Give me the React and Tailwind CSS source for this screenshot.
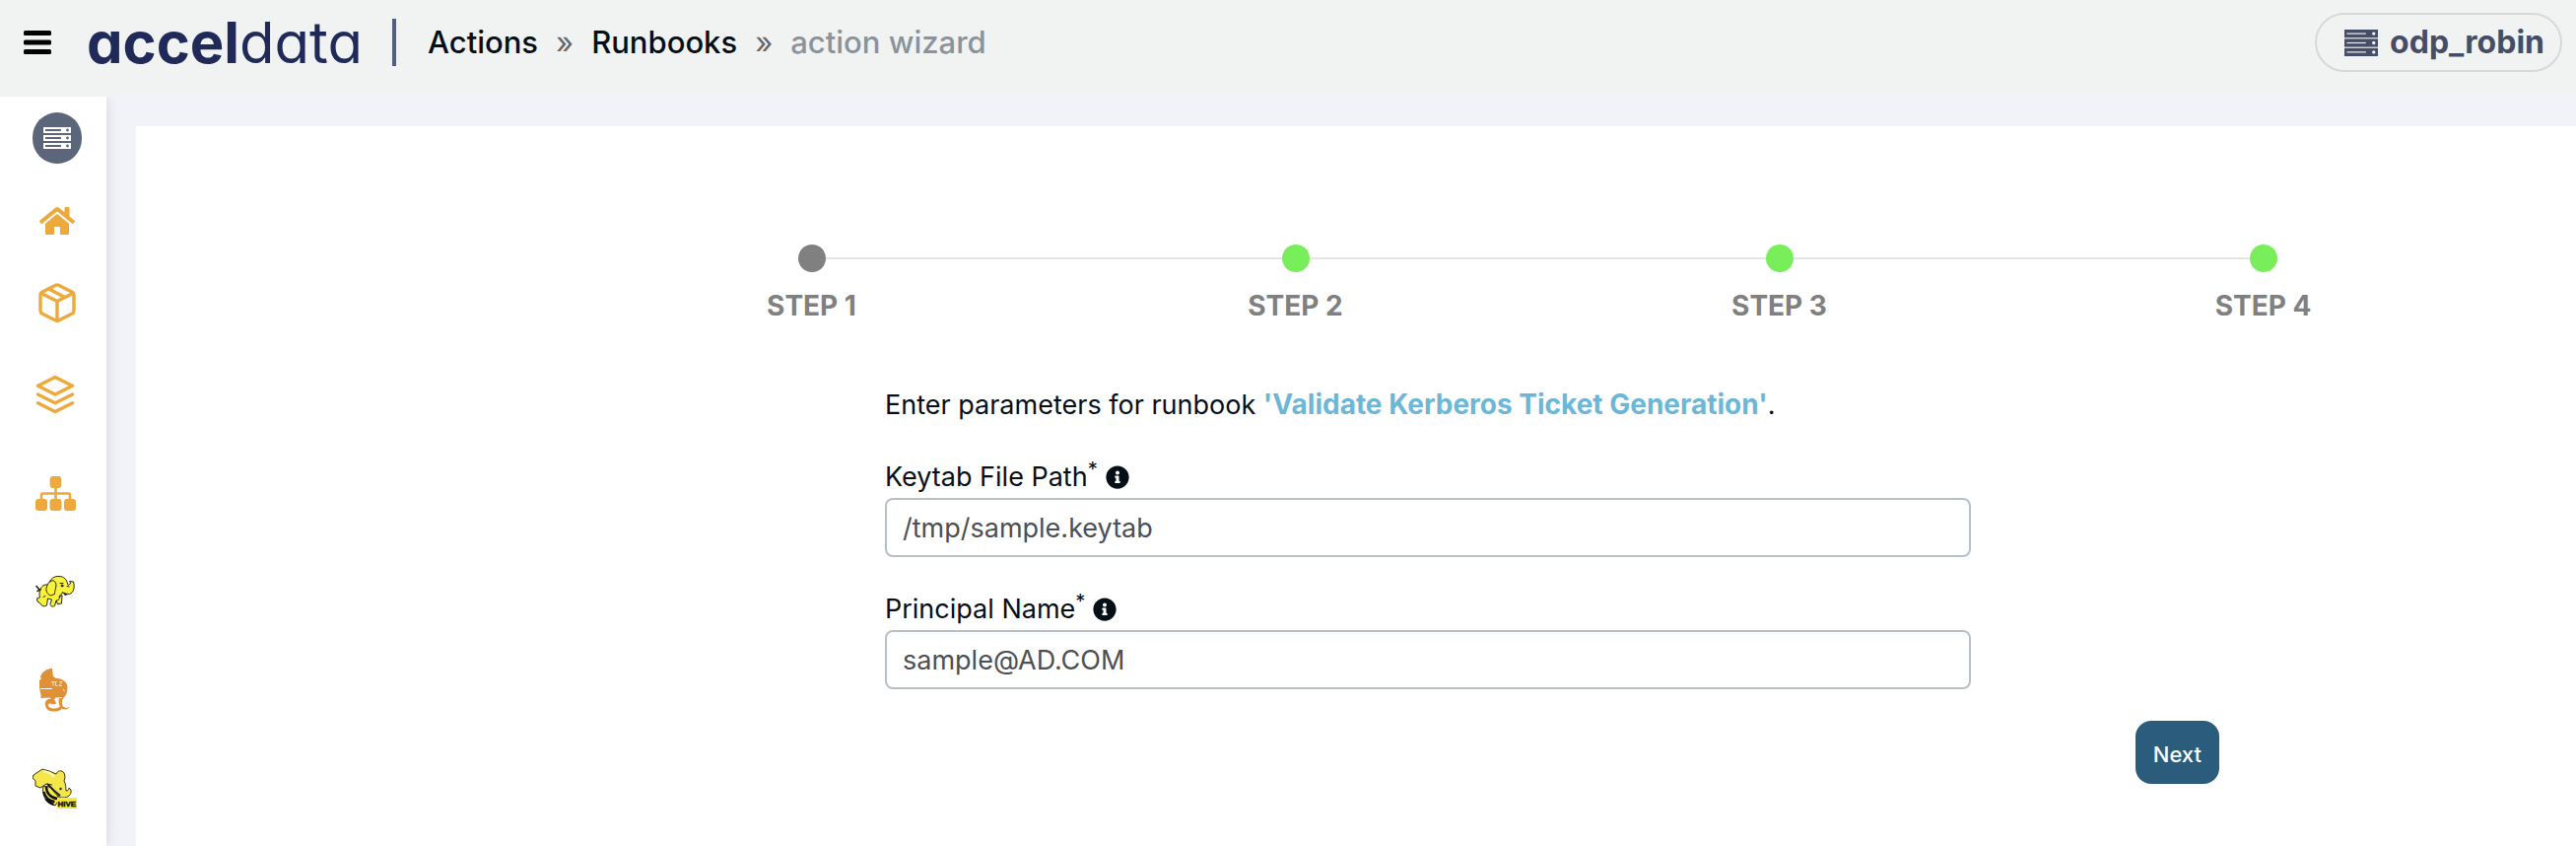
import { useState } from 'react';
import { FaHome, FaInfoCircle } from 'react-icons/fa';
import { FiLayers } from 'react-icons/fi';

const steps = [
  { label: 'STEP 1', current: true },
  { label: 'STEP 2' },
  { label: 'STEP 3' },
  { label: 'STEP 4' },
];

const MenuIcon = () => (
  <svg width="28" height="24" viewBox="0 0 28 24" fill="#000">
    <rect width="28" height="5" rx="1.5" />
    <rect y="9.5" width="28" height="5" rx="1.5" />
    <rect y="19" width="28" height="5" rx="1.5" />
  </svg>
);

// bar is the height of one server unit, units repeat every 8
const ServerIcon = ({ width, height, color, detail, bar = 6 }) => (
  <svg width={width} height={height} viewBox={`0 0 28 ${16 + bar}`} preserveAspectRatio="none">
    {[0, 8, 16].map(y => (
      <g key={y}>
        <rect y={y} width="28" height={bar} fill={color} />
        <rect x="2" y={y + bar - 4} width="16" height={8 - bar} fill={detail} />
        <circle cx="24.5" cy={y + bar / 2} r="1.4" fill={detail} />
      </g>
    ))}
  </svg>
);

const BoxIcon = () => (
  <svg width="38" height="40" viewBox="0 0 38 40" fill="none" stroke="#eda93b" strokeWidth="3.4" strokeLinejoin="round" strokeLinecap="round">
    <path d="M17 2.400 3.600 9.200Q2 10 2 12v16q0 2 1.600 2.900L17 37.700q2 1 4 0l13.400-6.800Q36 30 36 28V12q0-2-1.600-2.800L21 2.400q-2-1-4 0Z" />
    <path d="M3 10.500 19 18.500 35 10.500M19 18.500V38M11 6.200 26.500 14.200" />
  </svg>
);

const TopologyIcon = () => (
  <svg width="41" height="35" viewBox="0 0 41 35" fill="#eda93b">
    <rect x="14.7" width="11.6" height="12" rx="3" />
    <rect y="23" width="12" height="12" rx="3" />
    <rect x="14.5" y="23" width="12" height="12" rx="3" />
    <rect x="29" y="23" width="12" height="12" rx="3" />
    <path d="M6 24V19q0-1.500 1.500-1.500h26Q35 17.500 35 19v5M20.500 11v13" fill="none" stroke="#eda93b" strokeWidth="2.6" />
  </svg>
);

const HadoopIcon = () => (
  <svg width="40" height="34" viewBox="0 0 40 34" fill="#f7f33c" stroke="#27250f" strokeWidth="1" strokeLinejoin="round" strokeLinecap="round">
    <path d="M1 11.500 4 15M2 16.500 5 15" fill="none" strokeWidth="1.6" />
    <path d="M27 21 26.500 29l-4 .8-1.500-4Z" />
    <path d="M5 15C6 11 9 9.500 13 10 15 4 19 1 24 1.500 29 1.500 32 5 32.500 9 33 11 35 10.500 35.500 8L34.500 6.500 38.500 7C40 12 39 18 34.500 19.500 31 20.500 29.500 18.500 27.500 18L24 22C25 24 23.500 26 21 26L19.500 31.500C17 33 15 31.500 15 29.500L16.500 25 12.500 24 11.500 31C9 32.500 6 32 5.500 29.500L2 27 1.500 24 4.500 23C3.500 20 4 17.500 5 15Z" />
    <path d="M15 6.500C18 4.500 21 6.500 21 11 20.500 14 19.500 17 19.500 19.500L15.500 21C11.500 19.500 10 15.500 11.500 12 12 9 13.500 8 15 6.500Z" />
    <path d="m27.500 17.500 3 3.500 1.500-2" fill="#27250f" />
    <circle cx="27" cy="11" r="1" fill="#27250f" />
    <path d="M25 8.500h3M32 11.500l2 .5M8 22.500l2-1" fill="none" />
  </svg>
);

const TezIcon = () => (
  <svg width="32" height="44" viewBox="0 0 32 44">
    <path d="M13 0C6 1 2 5 1 9L4 8.500 0 12 0 20 1.500 27C2 28 1 29 1.500 30L10 29.500 14 32 17 30 23 30.500C27 29 28.500 24 28.500 19 28.500 15 25 10.500 18 10 14 9.500 12 6 13 0Z" fill="#df9137" />
    <path d="M13 0 14 11 4 13 1 9C2 4 7 0 13 0Z" fill="#df9137" />
    <path d="M14 36C13 33 8 33.500 7.500 37 7.500 42.500 18 44 22.500 39M7 36C8 31 15 31 15.500 36" fill="none" stroke="#df9137" strokeWidth="3" />
    <path d="M20 29H25C22 32 22.500 38 25 39 27.500 40.500 29 40 31.500 38.500 29.500 41.500 26 42 23.500 41 20 39 19 34 20 29Z" fill="#df9137" />
    <path d="M1 20.500H13M16 30 23 29.500M24 21l1.500 2" fill="none" stroke="#fff" strokeWidth="1" />
    <path d="M12 13.500h4M14 13.500v4M18 13.500h-1.500v4H18.500M20 13.500h3l-3 4h3" fill="none" stroke="#f8e2c6" strokeWidth="1" />
  </svg>
);

const HiveIcon = () => (
  <svg width="46" height="42" viewBox="0 0 46 42" strokeLinejoin="round">
    <path d="M11 18C9 28 14 36 23 38L27 32 22 20Z" fill="#f9ec3f" stroke="#222" strokeWidth="1" />
    <path d="M14 19c0 6 4 11 11 12M11.500 24c1 5 5 9 11 10M13.500 31c2 3 5 5 8 5.500" fill="none" stroke="#111" strokeWidth="2.4" />
    <path d="M24 6C25 2.500 30 1.500 32 5 33.500 8 33 10 32 13C34.500 17 33.500 20 34 23 36 23 37 22 37 20L39 22C40 27 36 30 31 30 27 30 24 27 21 23L16 17Z" fill="#f4e64b" stroke="#38340e" strokeWidth="1" />
    <path d="M1 7 10 1 17 3 24 6 29 11 24 17 14 16 8 20 3 18 3 13 0 10Z" fill="#f4e64b" />
    <path d="M24 6 17 3 10 1 1 7 0 10 3 13 3 18 8 20 14 16 20 17" fill="none" stroke="#38340e" strokeWidth="1" />
    <path d="m11 3 7 2 4 4" fill="none" stroke="#fdf8b4" strokeWidth="2" />
    <path d="m15 16 7 7 6 5" fill="none" stroke="#222" strokeWidth="2" />
    <circle cx="28.500" cy="21" r="1.2" fill="#222" />
    <rect x="25" y="30" width="20" height="11" fill="#f7ea32" />
    <text x="25.500" y="38.500" fontFamily="Liberation Sans, sans-serif" fontWeight="700" fontSize="8" fill="#111" stroke="#111" strokeWidth="0.5">HIVE</text>
  </svg>
);

const menu = [
  { name: 'Home', size: 'h-20', icon: <FaHome size={36} /> },
  { name: 'Packages', size: 'h-[86px]', icon: <BoxIcon /> },
  { name: 'Stacks', size: 'h-[100px] pr-1', icon: <FiLayers size={42} /> },
  { name: 'Topology', size: 'h-[100px] pr-1', icon: <TopologyIcon /> },
  { name: 'Hadoop', size: 'h-[100px] pr-1', icon: <HadoopIcon /> },
  { name: 'Tez', size: 'h-[100px] pr-1', icon: <TezIcon /> },
  { name: 'Hive', size: 'h-[100px] pr-1', icon: <HiveIcon /> },
];

function Field({ id, label, value, onChange }) {
  return (
    <div>
      <div className="flex items-center h-[42px] gap-2">
        <label htmlFor={id} className="text-[27px]">
          {label}<sup className="text-xl">*</sup>
        </label>
        <FaInfoCircle size={24} />
      </div>
      <input
        id={id} type="text" value={value} onChange={e => onChange(e.target.value)}
        className="block w-full h-[60px] px-4 border-2 border-[#b9bfc6] rounded-lg bg-white text-[27px] text-[#4d4f53] outline-none"
      />
    </div>
  );
}

export default function App() {
  const [keytab, setKeytab] = useState('/tmp/sample.keytab');
  const [principal, setPrincipal] = useState('sample@AD.COM');

  return (
    <div className="flex flex-col h-screen overflow-hidden bg-[#f2f3f8] font-['Inter',sans-serif] text-[#060f17]">
      <header className="flex items-center shrink-0 h-[98px] pb-3 pl-6 pr-3.5 bg-[#f1f3f2]">
        <button aria-label="Menu"><MenuIcon /></button>
        <a href="#" className="ml-9 w-[278px] whitespace-nowrap text-[58px] leading-none text-[#1f2a58] [font-feature-settings:'cv11']">
          <span className="font-bold">accel</span>data
        </a>
        <div className="w-1 h-12 ml-8 bg-[#4f6082]" />
        <nav className="flex items-center gap-[18px] ml-8 text-[31px] font-medium">
          <a href="#">Actions</a>
          <span className="text-[#666] font-normal">»</span>
          <a href="#">Runbooks</a>
          <span className="text-[#666] font-normal">»</span>
          <span className="text-[#8a929b]">action wizard</span>
        </nav>
        <button className="flex items-center h-[60px] gap-3 ml-auto pl-7 pr-4 border-2 border-[#d7d9d9] rounded-full text-[32px] font-bold text-[#454e66]">
          <ServerIcon width={34} height={27} bar={7} color="#454e66" detail="#f1f3f2" />
          odp_robin
        </button>
      </header>

      <div className="flex flex-1 min-h-0">
        <aside className="flex flex-col items-center shrink-0 w-[108px] pt-4 pl-2 bg-white shadow-[0_0_14px_rgba(0,0,0,0.12)] [clip-path:inset(0_-20px_0_0)]">
          <a href="#" aria-label="Cluster" className="flex items-center justify-center shrink-0 w-[50px] h-[52px] rounded-full bg-[#5c667b]">
            <ServerIcon width={28} height={22} color="#fff" detail="#5c667b" />
          </a>
          <nav className="flex flex-col items-center pt-[18px] text-[#eda93b]">
            {menu.map(({ name, size, icon }) => (
              <a key={name} href="#" aria-label={name} className={`flex items-center justify-center shrink-0 ${size}`}>{icon}</a>
            ))}
          </nav>
        </aside>

        <main className="flex-1 mt-[30px] ml-[30px] bg-white">
          {/* Stepper */}
          <div className="grid grid-cols-[440fr_1964fr_72fr] pt-[120px]">
            <ol className="grid grid-cols-4 col-start-2">
              {steps.map(({ label, current }, i) => (
                <li key={label} className="flex flex-col items-center text-[28px] leading-10 font-bold text-[#808080]">
                  <div className="flex items-center w-full">
                    <div className={`flex-1 h-0.5 ${i > 0 ? 'bg-[#e5e5e5]' : ''}`} />
                    <div className={`size-7 rounded-full ${current ? 'bg-[#808080]' : 'bg-[#78ee5a]'}`} />
                    <div className={`flex-1 h-0.5 ${i < steps.length - 1 ? 'bg-[#e5e5e5]' : ''}`} />
                  </div>
                  <span className="mt-3.5">{label}</span>
                </li>
              ))}
            </ol>
          </div>

          {/* Parameters */}
          <form className="grid grid-cols-[760fr_1102fr_252fr_362fr] pt-[60px]" onSubmit={e => e.preventDefault()}>
            <div className="col-start-2">
              <p className="text-[27px] leading-10">
                Enter parameters for runbook <b className="text-[28px] text-[#6db7d6]">'Validate Kerberos Ticket Generation'</b>.
              </p>
              <div className="flex flex-col gap-8 pt-8">
                <Field id="keytab" label="Keytab File Path" value={keytab} onChange={setKeytab} />
                <Field id="principal" label="Principal Name" value={principal} onChange={setPrincipal} />
              </div>
            </div>
            <div className="flex justify-end col-span-2 col-start-2 pt-8">
              <button type="submit" className="h-16 px-[18px] pt-1 rounded-2xl bg-[#2c5c7c] text-[22px] font-medium text-white">Next</button>
            </div>
          </form>
        </main>
      </div>
    </div>
  );
}
